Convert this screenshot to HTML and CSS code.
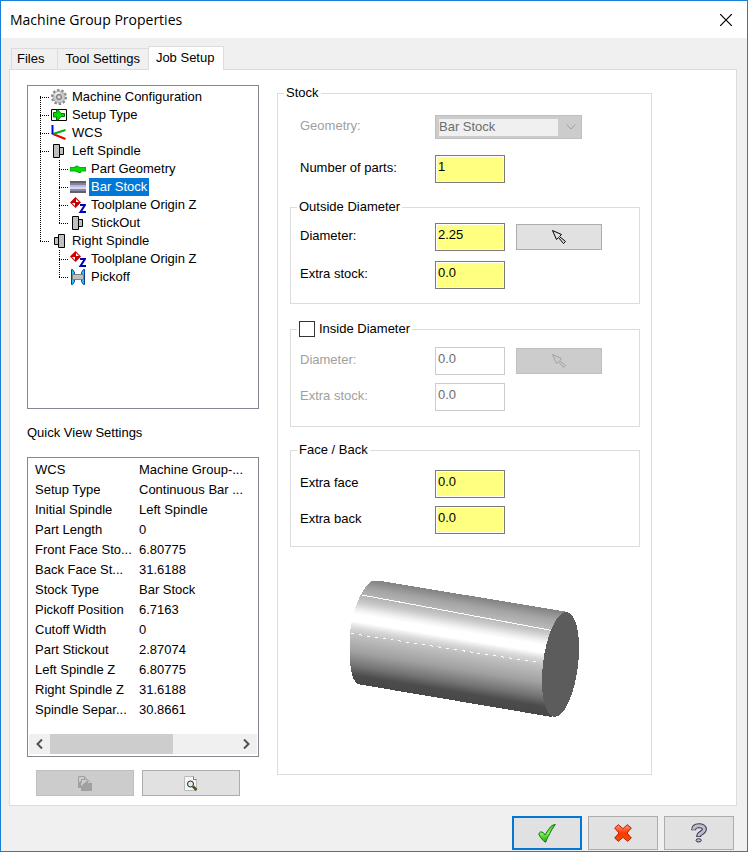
FILE: index.html
```html
<!DOCTYPE html>
<html lang="en">
<head>
<meta charset="utf-8">
<title>Machine Group Properties</title>
<link rel="stylesheet" href="styles.css">
</head>
<body>
<svg class="defs" aria-hidden="true">
  <symbol id="i-spindle" viewBox="0 0 16 16"><path d="M2.500 1.500h6v13h-6zM8.500 4.500h4v7h-4" fill="#c0c0c0" stroke="#000"/></symbol>
  <symbol id="i-spindle-r" viewBox="0 0 16 16"><path d="M7.500 1.500h6v13h-6zM7.500 4.500h-4v7h4" fill="#c0c0c0" stroke="#000"/></symbol>
  <symbol id="i-origin" viewBox="0 0 16 16"><path d="M5.500 0L11 5.500 5.500 11 0 5.500z" fill="#c80000"/><path d="M6 2l3 3H6zM2 6h3v3z" fill="#fff"/><path d="M10 8h5l-4.500 7H16" fill="none" stroke="#0000b8" stroke-width="2"/></symbol>
  <symbol id="i-pointer" viewBox="0 0 14 14"><path d="M.5 .5l9 4-2 2 6 5-2 2-5-6-2 2z" fill="none" stroke="currentColor"/></symbol>
</svg>
<main class="window">
  <header class="titlebar">
    <h1 class="title">Machine Group Properties</h1>
    <button class="close" aria-label="Close"><svg width="12" height="12" viewBox="0 0 12 12"><path d="M0 0l12 12M12 0L0 12" stroke="#000" stroke-width="1.200"/></svg></button>
  </header>
  <div class="tabs" role="tablist">
    <button class="tab tab--files" role="tab">Files</button>
    <button class="tab" role="tab">Tool Settings</button>
    <button class="tab tab--active" role="tab" aria-selected="true">Job Setup</button>
  </div>
  <section class="panel">
    <div class="side">
      <div class="tree-box">
        <ul class="tree">
          <li><div class="node"><svg class="icon" viewBox="0 0 16 16"><circle cx="8" cy="8" r="6.800" fill="none" stroke="#858585" stroke-width="2.400" stroke-dasharray="2.400 1.870"/><circle cx="8" cy="8" r="6" fill="#cacaca" stroke="#a0a0a0" stroke-width=".8"/><path d="M4 6.500a4.500 4.500 0 0 1 5-2.500" stroke="#f4f4f4" fill="none" stroke-width="1.500"/><circle cx="8" cy="8" r="2.600" fill="#a8a8a8" stroke="#808080"/><circle cx="8" cy="8" r="1.300" fill="#ddd"/></svg><span>Machine Configuration</span></div></li>
          <li><div class="node"><svg class="icon" viewBox="0 0 16 16"><path d="M.5 2.500h15v11H.5z" fill="#fff" stroke="#000"/><path d="M2.500 5.500h3v-2.500h1.500l3 3.500h3.500v3H10l-3 3.500H5.500v-3h-3z" fill="#00e000" stroke="#007800"/></svg><span>Setup Type</span></div></li>
          <li><div class="node"><svg class="icon" viewBox="0 0 16 16"><path d="M2 9l12.500 5" stroke="#f00000" stroke-width="2"/><path d="M2 9l12.500-4" stroke="#00b010" stroke-width="2"/><path d="M1.500 0v9.500" stroke="#0000f0" stroke-width="2"/></svg><span>WCS</span></div></li>
          <li><div class="node"><svg class="icon"><use href="#i-spindle"/></svg><span>Left Spindle</span></div>
            <ul>
              <li><div class="node"><svg class="icon" viewBox="0 0 16 16"><path d="M0 6.500h5V5.500L7 5l3 1.500h6v3.500h-5v1.500H9L5 10H0z" fill="#00e000" stroke="#008a00" stroke-width=".8"/></svg><span>Part Geometry</span></div></li>
              <li><div class="node"><svg class="icon" viewBox="0 0 16 16" shape-rendering="crispEdges"><path d="M0 3h16" stroke="#606060" stroke-width="2"/><path d="M0 5h16" stroke="#8080a8" stroke-width="2"/><path d="M0 7h16" stroke="#b8b8e0" stroke-width="2"/><path d="M0 9h16" stroke="#d8d8e8" stroke-width="2"/><path d="M0 11h16" stroke="#8888a8" stroke-width="2"/><path d="M0 13h16" stroke="#606068" stroke-width="2"/></svg><span class="selected">Bar Stock</span></div></li>
              <li><div class="node"><svg class="icon"><use href="#i-origin"/></svg><span>Toolplane Origin Z</span></div></li>
              <li><div class="node"><svg class="icon"><use href="#i-spindle"/></svg><span>StickOut</span></div></li>
            </ul>
          </li>
          <li><div class="node"><svg class="icon"><use href="#i-spindle-r"/></svg><span>Right Spindle</span></div>
            <ul>
              <li><div class="node"><svg class="icon"><use href="#i-origin"/></svg><span>Toolplane Origin Z</span></div></li>
              <li><div class="node"><svg class="icon" viewBox="0 0 16 16"><path d="M1.500 .5h1l2 3v9l-2 3h-1zM14.500 .5h-1l-2 3v9l2 3h1z" fill="#20c8f0" stroke="#00409c"/><path d="M2.500 5.500h11v5h-11z" fill="#c0c0c0" stroke="#808080"/></svg><span>Pickoff</span></div></li>
            </ul>
          </li>
        </ul>
      </div>
      <h2 class="caption">Quick View Settings</h2>
      <div class="list-box">
        <table class="list">
          <tr><th>WCS</th><td>Machine Group-...</td></tr>
          <tr><th>Setup Type</th><td>Continuous Bar ...</td></tr>
          <tr><th>Initial Spindle</th><td>Left Spindle</td></tr>
          <tr><th>Part Length</th><td>0</td></tr>
          <tr><th>Front Face Sto...</th><td>6.80775</td></tr>
          <tr><th>Back Face St...</th><td>31.6188</td></tr>
          <tr><th>Stock Type</th><td>Bar Stock</td></tr>
          <tr><th>Pickoff Position</th><td>6.7163</td></tr>
          <tr><th>Cutoff Width</th><td>0</td></tr>
          <tr><th>Part Stickout</th><td>2.87074</td></tr>
          <tr><th>Left Spindle Z</th><td>6.80775</td></tr>
          <tr><th>Right Spindle Z</th><td>31.6188</td></tr>
          <tr><th>Spindle Separ...</th><td>30.8661</td></tr>
        </table>
        <div class="scrollbar">
          <button class="arrow" aria-label="Scroll left"><svg width="7" height="10" viewBox="0 0 7 10"><path d="M6 .5L1.500 5 6 9.500" fill="none" stroke="#505050" stroke-width="2"/></svg></button>
          <div class="track"><div class="thumb"></div></div>
          <button class="arrow" aria-label="Scroll right"><svg width="7" height="10" viewBox="0 0 7 10"><path d="M1 .5L5.500 5 1 9.500" fill="none" stroke="#505050" stroke-width="2"/></svg></button>
        </div>
      </div>
      <div class="side-actions">
        <button class="btn" disabled aria-label="Copy"><svg width="14" height="15" viewBox="0 0 14 15"><path d="M.5 11.500V.5h6l2 2M3.500 7V3.500h6l3 3" fill="none" stroke="#a0a0a0"/><path d="M0 12V7l3-2v7zM3 15V10l7-6v3h4v8z" fill="#a0a0a0"/><path d="M6.500 1v2.500H9" fill="none" stroke="#a0a0a0"/></svg></button>
        <button class="btn" aria-label="Preview"><svg width="14" height="15" viewBox="0 0 14 15"><path d="M.5 .5h9l3 3v11H.5z" fill="#f4f4f4" stroke="#bbb"/><path d="M9.500 .5v3h3" fill="#fff" stroke="#777"/><path d="M9 10.500l3.500 3.500" stroke="#5c4810" stroke-width="2.500"/><circle cx="6.500" cy="8" r="3" fill="#d8f0fc" stroke="#222"/></svg></button>
      </div>
    </div>

    <fieldset class="group">
      <legend>Stock</legend>
      <div class="stock">
        <div class="field field--outer">
          <label class="off" for="geometry">Geometry:</label>
          <div class="combo"><select id="geometry" disabled><option>Bar Stock</option></select><svg class="chevron" width="10" height="6" viewBox="0 0 10 6"><path d="M.5 .5L5 5 9.500 .5" fill="none" stroke="#a0a0a0"/></svg></div>
        </div>
        <div class="field field--outer"><label for="parts">Number of parts:</label><input id="parts" type="text" value="1"></div>

        <fieldset class="group">
          <legend>Outside Diameter</legend>
          <div class="fields fields--outside">
            <div class="field"><label for="od">Diameter:</label><input id="od" type="text" value="2.25"><button class="btn" aria-label="Pick outside diameter"><svg width="14" height="14"><use href="#i-pointer"/></svg></button></div>
            <div class="field"><label for="od-extra">Extra stock:</label><input id="od-extra" type="text" value="0.0"></div>
          </div>
        </fieldset>

        <fieldset class="group group--inside">
          <legend><label class="check" for="inside"><input id="inside" type="checkbox">Inside Diameter</label></legend>
          <div class="fields">
            <div class="field"><label class="off" for="id">Diameter:</label><input id="id" type="text" value="0.0" disabled><button class="btn" disabled aria-label="Pick inside diameter"><svg width="14" height="14"><use href="#i-pointer"/></svg></button></div>
            <div class="field"><label class="off" for="id-extra">Extra stock:</label><input id="id-extra" type="text" value="0.0" disabled></div>
          </div>
        </fieldset>

        <fieldset class="group">
          <legend>Face / Back</legend>
          <div class="fields fields--face">
            <div class="field"><label for="face">Extra face</label><input id="face" type="text" value="0.0"></div>
            <div class="field"><label for="back">Extra back</label><input id="back" type="text" value="0.0"></div>
          </div>
        </fieldset>

        <svg class="bar" width="230" height="138" viewBox="10 9 230 138" role="img" aria-label="Bar stock preview">
          <defs><linearGradient id="metal" gradientUnits="userSpaceOnUse" x1="32" y1="10" x2="15" y2="112.600">
            <stop offset="0" stop-color="#868686"/><stop offset=".08" stop-color="#a4a4a4"/><stop offset=".17" stop-color="#b8b8b8"/><stop offset=".22" stop-color="#c8c8c8"/><stop offset=".3" stop-color="#f2f2f2"/><stop offset=".34" stop-color="#fff"/><stop offset=".41" stop-color="#fff"/><stop offset=".47" stop-color="#dadada"/><stop offset=".54" stop-color="#c0c0c0"/><stop offset=".7" stop-color="#a0a0a0"/><stop offset=".83" stop-color="#747474"/><stop offset=".92" stop-color="#4c4c4c"/><stop offset="1" stop-color="#484848"/>
          </linearGradient></defs>
          <g shape-rendering="crispEdges">
            <path d="M32 10h9L228 41 212 146 17 113C12 108 10 98 10 85V62C12 42 20 18 32 10z" fill="url(#metal)"/>
            <path d="M22 24l190 35.500" stroke="#fff"/>
            <path d="M11 62.500l188 29" stroke="#fff" stroke-dasharray="3 5"/>
            <ellipse cx="220.500" cy="93.500" rx="17.500" ry="52.800" transform="rotate(7 220.500 93.500)" fill="#5c5c5c"/>
          </g>
        </svg>
      </div>
    </fieldset>
  </section>

  <footer class="actions">
    <button class="btn btn--default" aria-label="OK"><svg width="18" height="19" viewBox="0 0 54 57"><defs><linearGradient id="green" x2="0" y2="1"><stop stop-color="#40c030"/><stop offset=".5" stop-color="#80f050"/><stop offset="1" stop-color="#18a010"/></linearGradient></defs><path d="M2 30l6-7 8 3 5 7 10-16L41 5l11-4-11 17-13 24-5 13-7-5-8-9z" fill="url(#green)" stroke="#147a10" stroke-width="3"/></svg></button>
    <button class="btn" aria-label="Cancel"><svg width="18" height="18" viewBox="0 0 54 54"><defs><linearGradient id="red" x2="0" y2="1"><stop stop-color="#ff9070"/><stop offset=".5" stop-color="#ff3800"/><stop offset="1" stop-color="#f05000"/></linearGradient></defs><path d="M13 2l14 12L40 2l12 10-13 15 13 15-11 10-14-12-14 12L2 42l13-15L2 12z" fill="url(#red)" stroke="#b82008" stroke-width="3"/></svg></button>
    <button class="btn" aria-label="Help"><svg width="16" height="20" viewBox="0 0 48 60"><g fill="none" stroke-linejoin="round"><path d="M8 22C8 10 15 8 24 8s16 4 16 11-6 9-12 13c-4 2-5 4-5 10" stroke="#33334a" stroke-width="15"/><path d="M8 20C8 10 15 8 24 8s16 4 16 11-6 9-12 13c-4 2-5 4-5 8" stroke="#bcbccc" stroke-width="9"/></g><ellipse cx="23" cy="52" rx="8" ry="5" fill="#bcbccc" stroke="#33334a" stroke-width="3"/></svg></button>
  </footer>
</main>
</body>
</html>
```
FILE: styles.css
```css
* { box-sizing: border-box; }

body {
  margin: 0;
  background: #f0f0f0;
  color: #000;
  font: 13px/16px "Liberation Sans", Arial, sans-serif;
}

button, input, select { font: inherit; color: inherit; margin: 0; }
svg { display: block; }
.defs { position: absolute; width: 0; height: 0; }

.window {
  display: flex;
  flex-direction: column;
  min-height: 100vh;
  border: 1px solid #1a80d6;
}

.titlebar {
  display: flex;
  align-items: center;
  justify-content: space-between;
  height: 37px;
  padding: 0 15px 0 9px;
  background: #fff;
}
.title { margin: 0; font: 14px/20px "Open Sans", "Noto Sans", sans-serif; }
.close { padding: 0; border: 0; background: none; }

.tabs {
  display: flex;
  align-items: flex-end;
  height: 31px;
  padding: 0 10px;
}
.tab {
  height: 21px;
  padding: 0 8px 0 7px;
  border: 1px solid #dcdcdc;
  border-bottom: 0;
  border-right: 0;
  background: #f0f0f0;
  white-space: nowrap;
}
.tab--files { padding: 0 13px 0 5px; }
.tab--active {
  position: relative;
  height: 24px;
  margin-bottom: -1px;
  padding: 0 9px 2px 7px;
  border-right: 1px solid #dcdcdc;
  background: #fff;
}

.panel {
  display: grid;
  grid-template-columns: 232px minmax(0, 1fr);
  align-items: start;
  gap: 18px;
  flex: 1;
  margin: 0 10px 0 8px;
  padding: 15px 84px 8px 17px;
  border: 1px solid #dcdcdc;
  background: #fff;
}

.tree-box {
  height: 324px;
  padding: 2px 0 0 12px;
  border: 1px solid #828790;
}
.tree, .tree ul { margin: 0; padding: 0; list-style: none; }
.tree ul { margin-left: 19px; }
.tree li { position: relative; }
.tree li::before {
  content: "";
  position: absolute;
  inset: 0 auto 0 0;
  width: 1px;
  background: repeating-linear-gradient(#000 0 1px, transparent 1px 2px);
}
.tree > li:first-child::before { top: 8px; }
.tree li:last-child::before { bottom: auto; height: 10px; }
.node {
  display: flex;
  align-items: center;
  height: 18px;
  background: repeating-linear-gradient(90deg, #000 0 1px, transparent 1px 2px) 0 9px / 10px 1px no-repeat;
  padding-left: 11px;
}
.node span { margin-left: 3px; padding: 0 2px; line-height: 18px; }
.node .selected { background: #0078d7; color: #fff; }
.icon { width: 16px; height: 16px; }

.caption { margin: 16px 0; font-size: 13px; font-weight: 400; line-height: 16px; }

.list-box {
  display: flex;
  flex-direction: column;
  justify-content: space-between;
  height: 300px;
  padding: 2px 1px 2px;
  border: 1px solid #828790;
}
.list { width: 100%; border-collapse: collapse; table-layout: fixed; }
.list th, .list td { height: 20px; padding: 0 0 0 6px; font-weight: 400; text-align: left; white-space: nowrap; }
.list th { width: 104px; }

.scrollbar { display: flex; height: 20px; background: #f0f0f0; }
.arrow { display: grid; place-items: center; width: 21px; padding: 0; border: 0; background: none; }
.track { flex: 1; }
.thumb { width: 66%; height: 100%; background: #cdcdcd; }

.side-actions { display: grid; grid-template-columns: 1fr 1fr; gap: 8px; margin: 13px 19px 0 9px; }

.btn {
  display: grid;
  place-items: center;
  height: 26px;
  padding: 0;
  border: 1px solid #adadad;
  background: #e1e1e1;
}
.btn:disabled { border-color: #bfbfbf; background: #ccc; color: #a0a0a0; }

.group { min-width: 0; margin: 0; padding: 0 6px; border: 1px solid #dcdcdc; }
.group legend { height: 16px; padding: 0 2px; }
.group--inside { margin: 17px 0 15px; }
.stock { padding: 14px 5px 56px 6px; }

.field { display: flex; align-items: center; }
.field label { width: 135px; padding-bottom: 3px; }
.field--outer { margin-bottom: 16px; padding-left: 10px; }
.off { color: #a0a0a0; }
.field input {
  width: 70px;
  height: 28px;
  padding: 0 2px 6px;
  border: 1px solid #7a7a7a;
  background: #ffff80;
  box-shadow: inset 0 0 0 1px #fff;
}
.field input:disabled { border-color: #ccc; background: #fff; color: #6d6d6d; }
.field .btn { width: 86px; margin-left: 11px; }

.fields { display: grid; gap: 8px; padding: 10px 3px 15px; }
.fields--outside { gap: 10px; padding-top: 8px; padding-bottom: 14px; }
.fields--face { padding-top: 12px; padding-bottom: 12px; }

.combo {
  display: flex;
  align-items: center;
  justify-content: space-between;
  width: 147px;
  height: 24px;
  padding: 0 5px 0 3px;
  border: 1px solid #bfbfbf;
  background: #ccc;
}
.combo select {
  appearance: none;
  width: 119px;
  height: 17px;
  padding: 0;
  border: 0;
  background: #f0f0f0;
  color: #6d6d6d;
  opacity: 1;
}

.check { display: flex; align-items: center; gap: 4px; }
.check input {
  appearance: none;
  width: 16px;
  height: 16px;
  border: 1px solid #333;
  background: #fff;
}
.check input:checked { background: #0078d7; }

.bar { margin: 33px 0 0 60px; }

.actions {
  display: flex;
  justify-content: flex-end;
  gap: 6px;
  padding: 10px 13px 1px;
}
.actions .btn { width: 70px; height: 34px; }
.actions .btn--default { border: 2px solid #0078d7; }
```
